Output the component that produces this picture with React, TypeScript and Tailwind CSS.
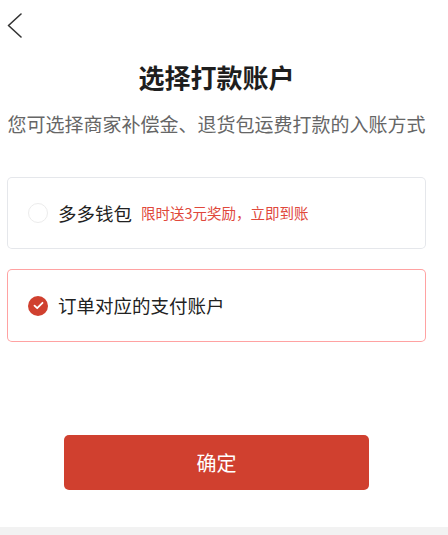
import { useState } from "react";

const FONT = { fontFamily: '"Noto Sans CJK SC", "Noto Sans", sans-serif' };

type Choice = "wallet" | "order";

const CARD = "flex items-center rounded-[5px] pl-[21px] text-left ring-1 ring-inset";

export default function App() {
  const [selected, setSelected] = useState<Choice>("order");

  return (
    <div className="flex h-[535px] w-[448px] flex-col bg-white text-[#222]" style={FONT}>
      <div className="flex w-[433px] flex-col">
        <header className="h-[50px] pl-[7px] pt-[13px]">
          <svg width="16" height="26" viewBox="0 0 16 26" fill="none">
            <path d="M14 1 L1.5 12.5 L14 24" stroke="#333" strokeWidth="1.6" strokeLinecap="round" strokeLinejoin="round" />
          </svg>
        </header>

        <h1 className="mt-[11px] text-center text-[26px] font-bold leading-[32px] text-[#1e1e1e]">选择打款账户</h1>
        <p className="mt-[17px] text-center text-[19px] leading-[28px] text-[#666]">
          您可选择商家补偿金、退货包运费打款的入账方式
        </p>

        <div className="mt-[39px] flex flex-col gap-[20px] px-[7px]">
          <button
            onClick={() => setSelected("wallet")}
            className={`${CARD} h-[72px] ${selected === "wallet" ? "ring-red-300" : "ring-gray-200"}`}
          >
            <Radio checked={selected === "wallet"} />
            <span className="ml-[10px] text-[18.5px] leading-none text-[#222]">多多钱包</span>
            <span className="ml-[9px] text-[14.5px] leading-none text-[#e0483b]">限时送3元奖励，立即到账</span>
          </button>

          <button
            onClick={() => setSelected("order")}
            className={`${CARD} h-[73px] ${selected === "order" ? "ring-red-300" : "ring-gray-200"}`}
          >
            <Radio checked={selected === "order"} />
            <span className="ml-[10px] text-[18.5px] leading-none text-[#222]">订单对应的支付账户</span>
          </button>
        </div>

        <div className="mt-[93px] flex justify-center">
          <button className="h-[55px] w-[305px] rounded-[5px] bg-[#d0402f] text-[20px] text-white">确定</button>
        </div>
      </div>

      <div className="mt-auto h-[8px] bg-[#f2f2f2]" />
    </div>
  );
}

function Radio({ checked }: { checked: boolean }) {
  if (checked) {
    return (
      <span className="flex h-[20px] w-[20px] items-center justify-center rounded-full bg-[#d0402f]">
        <svg width="11" height="9" viewBox="0 0 11 9" fill="none">
          <path d="M1.5 4.6 L4.2 7.2 L9.5 1.8" stroke="white" strokeWidth="1.8" strokeLinecap="round" strokeLinejoin="round" />
        </svg>
      </span>
    );
  }
  return <span className="h-[20px] w-[20px] rounded-full border border-[#ececec]" />;
}
